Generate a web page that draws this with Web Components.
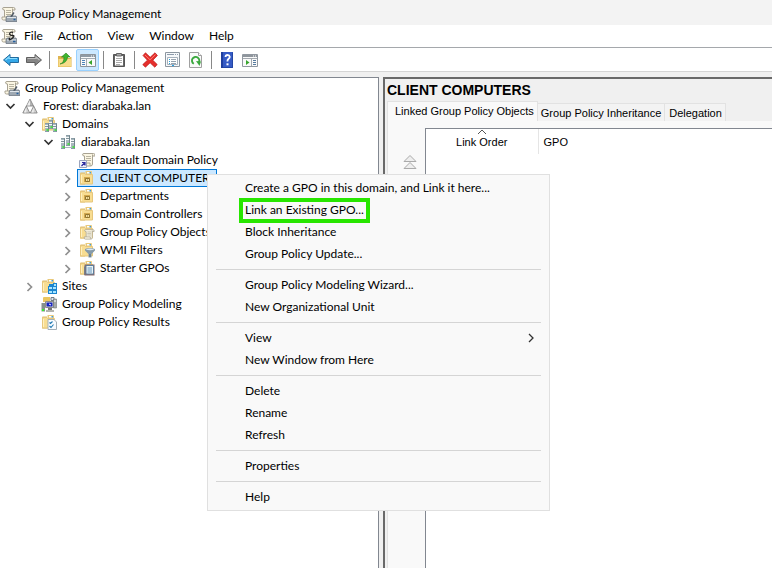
<!DOCTYPE html>
<html lang="en">
<head>
<meta charset="utf-8">
<title>Group Policy Management</title>
<style>
html, body { height: 100%; }
body { margin: 0; overflow: hidden; font: 12px/18px Lato, "Open Sans", "Noto Sans", sans-serif; color: #000; background: #f0f0f0; }
</style>
</head>
<body>
<gp-console>
  <gp-titlebar slot="title">Group Policy Management</gp-titlebar>
  <gp-menubar slot="menu"></gp-menubar>
  <gp-toolbar slot="tools"></gp-toolbar>
  <gp-tree slot="tree">
    <gp-node level="0" icon="console">Group Policy Management</gp-node>
    <gp-node level="1" icon="forest" state="open">Forest: diarabaka.lan</gp-node>
    <gp-node level="2" icon="domains" state="open">Domains</gp-node>
    <gp-node level="3" icon="domain" state="open">diarabaka.lan</gp-node>
    <gp-node level="4" icon="link">Default Domain Policy</gp-node>
    <gp-node level="4" icon="ou" state="closed" selected>CLIENT COMPUTERS</gp-node>
    <gp-node level="4" icon="ou" state="closed">Departments</gp-node>
    <gp-node level="4" icon="ou" state="closed">Domain Controllers</gp-node>
    <gp-node level="4" icon="gpos" state="closed">Group Policy Objects</gp-node>
    <gp-node level="4" icon="wmi" state="closed">WMI Filters</gp-node>
    <gp-node level="4" icon="starter" state="closed">Starter GPOs</gp-node>
    <gp-node level="2" icon="sites" state="closed">Sites</gp-node>
    <gp-node level="2" icon="modeling">Group Policy Modeling</gp-node>
    <gp-node level="2" icon="results">Group Policy Results</gp-node>
  </gp-tree>
  <gp-details slot="details">CLIENT COMPUTERS</gp-details>
  <gp-context-menu slot="popup">
    <gp-item>Create a GPO in this domain, and Link it here...</gp-item>
    <gp-item marked>Link an Existing GPO...</gp-item>
    <gp-item>Block Inheritance</gp-item>
    <gp-item>Group Policy Update...</gp-item>
    <gp-separator></gp-separator>
    <gp-item>Group Policy Modeling Wizard...</gp-item>
    <gp-item>New Organizational Unit</gp-item>
    <gp-separator></gp-separator>
    <gp-item submenu>View</gp-item>
    <gp-item>New Window from Here</gp-item>
    <gp-separator></gp-separator>
    <gp-item>Delete</gp-item>
    <gp-item>Rename</gp-item>
    <gp-item>Refresh</gp-item>
    <gp-separator></gp-separator>
    <gp-item>Properties</gp-item>
    <gp-separator></gp-separator>
    <gp-item>Help</gp-item>
  </gp-context-menu>
</gp-console>
<script>
const folder = `<path d="M1 3.500q0-1 1-1h4V14.500H1z" fill="#e0bd6c"/><path d="M6.500 1H12q1 0 1 1v3H6.500z" fill="#e9c97a"/><path d="M8 2h4v1.500H8z" fill="#fff"/><path d="M10.500 2H12v1.500h-1.500z" fill="#3b9be0"/><path d="M1.500 3.500h4l1 1h7V14h-12z" fill="#f8dd92" stroke="#e6c67c"/><path d="M2.500 5v8" stroke="#fff0bf"/>`;
const scroll = `<path d="M3 1.500h9.500q1.500 0 1.500 1.500v1h-2.500v8q0 2-2 2H2.500Q1 14 1 12.500V11h2.500V4Q1.500 4 1.500 2.800 1.500 1.500 3 1.500z" fill="#fbf6e3" stroke="#a8a292"/><path d="M11.500 4V2.500M3.500 11h5.500v1.500q0 1 .8 1.500" fill="none" stroke="#a8a292"/><path d="M5 4.500h5M5 6.500h5M5 8.500h5" stroke="#b9b4a2"/>`;
const server = (x, y, h) => `<path d="M${x} ${y}h4v${h}h-4z" fill="#a9b8be"/><path d="M${x + 3.5} ${y}v${h}" stroke="#71848c"/><path d="M${x} ${y + .5}h4M${x} ${y + h - .5}h4" stroke="#8395a0" stroke-width=".8"/><path d="M${x} ${y + 2.5}h3M${x} ${y + 4.5}h3" stroke="#f4f8f9"/><path d="M${x} ${y + 3.5}h3" stroke="#71848c" stroke-width=".7"/><path d="M${x + 1.5} ${y + h - 3}h2v2h-2z" fill="#4fe04a"/>`;
const icons = {
  console: scroll + `<path d="M6 10h9l1 2v3.500H5V12z" fill="#9fa9b3" stroke="#626c77" stroke-width=".7"/><path d="M6 11.500h9" stroke="#e0e6eb"/><path d="M12.500 13.500h2" stroke="#245f9e" stroke-width="1.500"/><path d="M9 10.500 12.500 6l1 1-2.500 4z" fill="#515b66"/>`,
  consolelock: scroll + `<path d="M6 10h9l1 2v3.500H5V12z" fill="#9fa9b3" stroke="#626c77" stroke-width=".7"/><path d="M6 12h9" stroke="#e0e6eb"/><path d="M12 13.500h2.500" stroke="#245f9e" stroke-width="1.500"/><path d="M12 4.500Q9 3.500 8.700 5.500T11.500 7.500 11 10.500 8.500 9.800" fill="none" stroke="#222" stroke-width="1.300"/>`,
  forest: `<path d="M8 1 4.500 8h7z" fill="#b5b5b5" stroke="#7c7c7c" stroke-width=".8"/><path d="M4.300 8 .8 15h7zM11.700 8l3.500 7h-7z" fill="#cfcfcf" stroke="#7c7c7c" stroke-width=".8"/><path d="M8 2v5.500H5zM4.300 9.500v5H2zM11.700 9.500v5H9.500z" fill="#eee"/>`,
  domains: folder + server(8, 4, 9) + server(4, 7, 9) + server(12, 7, 9),
  domain: server(6, 1, 11) + server(1, 4, 11) + server(11, 4, 11) + `<path d="M5 13.500h6" stroke="#a9b8be"/>`,
  link: `<g transform="translate(2 0)">${scroll}</g><path d="M.5 8.500h7v7h-7z" fill="#f1f3fa" stroke="#9ba4bd"/><path d="M3 10.500h3v3M6 10.500 2.500 14" fill="none" stroke="#2b2b9e" stroke-width="1.200"/>`,
  ou: folder + `<path d="M5 7h6v5H5z" fill="#d2a84e"/><path d="M6.500 8.500h4v3h-4z" fill="#f5df9d" stroke="#92762f"/><path d="M8 9.500h1v1H8z" fill="#92762f"/>`,
  gpos: folder + `<g transform="translate(4.500 4.500) scale(.76)">${scroll}</g>`,
  wmi: folder + `<path d="M6 7q5-2 10 0v1.500L12.500 12v3.500h-3V12L6 8.500z" fill="#879ba9"/><path d="M6.500 7.300q4.500-1.500 9 0-4.500 2-9 0z" fill="#d9e8f2"/><path d="M10.500 12h1v3h-1z" fill="#486a8e"/>`,
  starter: folder + `<path d="M5.500 4.500h10V15.500h-10z" fill="#8a6a6a"/><path d="M7 5.500h7.500V14H7z" fill="#eaf3f8" stroke="#5d7d9a"/><path d="M8.500 8h4.500M8.500 10h4.500M8.500 12h4.500" stroke="#6597bd"/><path d="M5.500 6.500v8.500" stroke="#7a7f86"/>`,
  sites: folder + `<path d="M8 6h4V5h4v11H7V8h1z" fill="#1b85cf"/><path d="M8 9h3v2H8zM12 9h3v2h-3zM8 13h3v2H8zM12 13h3v2h-3zM13 6h2v2h-2z" fill="#a9e6ff"/>`,
  modeling: `<path d="M2 2q0-1 1-1h6v5H2z" fill="#eac65f"/><path d="M4.500 5.500h8v6h-8z" fill="#d6d6d0" stroke="#8c8c89"/><path d="M5.500 6.500h6v4h-6z" fill="#1724c1"/><path d="M7 12h4v2H7z" fill="#777"/><path d="M5 15h8" stroke="#b3b3ad" stroke-width="2"/><path d="M.5 7h3.500v8.500H.5z" fill="#85908b"/><path d="M1 13h2v2H1z" fill="#32ee2c"/><path d="M10 1.500h3v3h-3z" fill="#dde4ed" stroke="#737c85"/><path d="M12.500 3h3v9h-3z" fill="#a4aaa9" stroke="#737978" stroke-width=".6"/><path d="M13 5h2M8 8l2 1" stroke="#fff"/>`,
  results: folder + `<path d="M7 5.500h6l2.500 2.500v7.500H7z" fill="#f7fbff" stroke="#a3afb7"/><path d="m8.500 8.500 1 1 2-2M8.500 12l1.500 1.500 2.500-3" fill="none" stroke="#237bb4" stroke-width="1.100"/>`,
  back: `<path d="M.5 8 7 2.500V5.500h8.500v5H7v3z" fill="#35a8e8" stroke="#226b9e"/><path d="M2.500 8 6 5v1.500h8" fill="none" stroke="#8bdcff" stroke-width="1.200"/>`,
  forward: `<path d="M15.500 8 9 2.500V5.500H.5v5H9v3z" fill="#858585" stroke="#5f5f5f"/><path d="M1.500 6.500H10V5l3.500 3" fill="none" stroke="#bcbcbc" stroke-width="1.200"/>`,
  up: `<path d="M1 4h5l1 1h7.500v10H1z" fill="#dfb450"/><path d="M1.500 7H14v7.500H1.500z" fill="#f7dc8a"/><path d="M11 5.500h2" stroke="#fff"/><path d="M3 12q4-1 4-7H4.500L9 1l4 4h-2.500Q10 11 3 12z" fill="#3fb52f" stroke="#268220" stroke-width=".6"/>`,
  tree: `<path d="M.5 2.500h15v12H.5z" fill="#fafafa" stroke="#8d949b"/><path d="M1 3h14v2H1z" fill="#8f9aa5"/><path d="M11 4h1M13 4h1" stroke="#fff"/><path d="M1 6.500h14M6.500 7v7" stroke="#a3abb2"/><path d="M2 8.500h3M2 10.500h3M2 12.500h3" stroke="#4d83ba"/><path d="M12 8v5l-3.500-2.500z" fill="#39a52c"/>`,
  clip: `<path d="M2.500 2.500h11v12h-11z" fill="#666" stroke="#555"/><path d="M4 4h8v9.500H4z" fill="#fff"/><path d="M5.500 1.500h5V4h-5z" fill="#aaa" stroke="#666"/><path d="M5 6.500h6M5 8.500h6M5 10.500h6M5 12.500h4" stroke="#aaa"/>`,
  remove: `<path d="m3.500.8 4.700 4.500L13 .8l2.400 2.700-4.600 4.700 4.400 4.300-2.400 2.700-4.700-4.400-4.700 4.400-2.600-2.600 4.600-4.400L1 3.500z" fill="#e62f2c" stroke="#b81717" stroke-width=".7"/><path d="m3 3 5 4.800L13.500 2.500" fill="none" stroke="#ff796f"/>`,
  props: `<path d="M.5.500h14v14H.5z" fill="#f6f8fa" stroke="#8c96a0"/><path d="M2 2.500h7M10 2.500h1M12 2.500h1" stroke="#8d9bab"/><path d="M2.500 5.500h10v7h-10z" fill="#fff" stroke="#a6b1bc"/><path d="M4 7.500h1M4 9.500h1M4 11.500h1" stroke="#24a0d8"/><path d="M6 7.500h5M6 9.500h5M6 11.500h5" stroke="#97a3af"/><path d="M7 13.500h2" stroke="#22a0e5"/>`,
  refresh: `<path d="M1.500.500h9l3 3v12h-12z" fill="#fafafa" stroke="#a0a0a0"/><path d="M10.500.500v3h3" fill="#fff" stroke="#a0a0a0"/><path d="M5.800 11.800A3.700 3.700 0 1 1 10.500 11" fill="none" stroke="#3aa83d" stroke-width="1.900"/><path d="M8 9l5 .5-1.500 4.500z" fill="#3aa83d"/>`,
  help: `<path d="M2 0h12v16H2z" fill="#365bc5"/><path d="M2 0h2v16H2z" fill="#203f9d"/><path d="M13.500.500v15H4" fill="none" stroke="#2346a4"/><path d="M6.500 5q0-2 2-2t2.300 1.800q0 1.200-1.400 2.200-1 .8-1 2.500" fill="none" stroke="#fff" stroke-width="1.800"/><path d="M7.500 11.300h2v2h-2z" fill="#fff"/>`,
  action: `<path d="M.5 2.500h15v12H.5z" fill="#fafafa" stroke="#9198a0"/><path d="M1 3h14v2H1z" fill="#8f969d"/><path d="M11 4h1M13 4h1" stroke="#fff"/><path d="M1 6.500h14M9.500 7v7" stroke="#a3a9af"/><path d="M11 8.500h3M11 10.500h3M11 12.500h3" stroke="#557a9e"/><path d="M4 8v5l3.500-2.500z" fill="#38a52d"/>`,
  open: `<path d="m4.500 6 4 4 4-4" fill="none" stroke="#333" stroke-width="1.700"/>`,
  closed: `<path d="m6.500 5 4 4-4 4" fill="none" stroke="#8f8f8f" stroke-width="1.700"/>`,
  submenu: `<path d="m6 4 4 4-4 4" fill="none" stroke="#333" stroke-width="1.300"/>`,
  sort: `<path d="m4 10 4-4 4 4" fill="none" stroke="#555"/>`,
  top: `<path d="M8 1.500 14 7.500H2zM8 8.500l6 6H2z" fill="#eee" stroke="#aaa"/>`
};

function define(name, css, html, setup) {
  const template = document.createElement('template');
  customElements.define(name, class extends HTMLElement {
    connectedCallback() {
      if (this.shadowRoot) return;
      template.innerHTML = `<style>:host,*{box-sizing:border-box}button{font:inherit;color:inherit;background:none;border:0;padding:0;margin:0;white-space:nowrap}${css}</style>${typeof html === 'function' ? html(this) : html}`;
      this.attachShadow({ mode: 'open' }).append(template.content.cloneNode(true));
      if (setup) setup(this);
    }
  });
}

define('gp-icon', ':host{display:block;flex:none;width:16px;height:16px}svg{display:block;width:16px;height:16px}',
  el => `<svg viewBox="0 0 16 16" aria-hidden="true">${icons[el.getAttribute('name')]}</svg>`);

define('gp-titlebar', ':host{display:flex;align-items:center;gap:5px;height:25px;padding:2px 0 0 1px;background:#f3f3f3}',
  '<gp-icon name="console"></gp-icon><span><slot></slot></span>');

define('gp-menubar', ':host{display:flex;align-items:center;height:22px;padding-left:1px;background:#fff}nav{display:flex;gap:15px;padding-left:7px}',
  `<gp-icon name="consolelock"></gp-icon><nav>${['File', 'Action', 'View', 'Window', 'Help'].map(t => `<button>${t}</button>`).join('')}</nav>`);

define('gp-toolbar', `:host{display:flex;align-items:center;height:25px;padding-left:3px;background:#fff;border-top:1px solid #a5a8ac;border-bottom:1px solid #d5d5d5}
  button{display:grid;place-items:center;width:23px;height:22px;border:1px solid transparent}button:first-of-type{margin-left:-4px}
  button.on{background:#cce8ff;border-color:#99d1ff;border-radius:2px}i{width:1px;height:18px;margin:0 3px 0 4px;background:#888}`,
  [['back', 'Back'], ['forward', 'Forward'], 0, ['up', 'Up'], ['tree', 'Show console tree'], 0, ['clip', 'Copy'], 0, ['remove', 'Delete'], ['props', 'Properties'], ['refresh', 'Refresh'], 0, ['help', 'Help'], ['action', 'Show action pane']]
    .map(b => b ? `<button class="${b[0] === 'tree' ? 'on' : ''}" aria-label="${b[1]}"><gp-icon name="${b[0]}"></gp-icon></button>` : '<i></i>').join(''));

define('gp-tree', ':host{display:block;padding-top:1px;min-height:100%;background:#fff;border:1px solid #828790;border-left:0;border-bottom:0}', '<slot></slot>',
  el => el.setAttribute('role', 'tree'));

define('gp-node', `:host{display:flex;align-items:center;height:18px;padding-left:calc(var(--level) * 19px - 17px)}:host([level="0"]){padding-left:2px}
  .twist{width:16px;height:16px;margin-right:2px;flex:none}:host([level="0"]) .twist{display:none}
  .row{display:flex;align-items:center;gap:5px;height:18px;border:1px solid transparent;padding-left:1px;white-space:nowrap}
  :host([selected]) .row{background:#cce8ff;border-color:#0078d7}`,
  el => {
    const s = el.getAttribute('state');
    const twist = s ? `<button class="twist" aria-label="${s === 'open' ? 'Collapse' : 'Expand'}"><gp-icon name="${s}"></gp-icon></button>` : '<span class="twist"></span>';
    return `${twist}<div class="row"><gp-icon name="${el.getAttribute('icon')}"></gp-icon><span><slot></slot></span></div>`;
  },
  el => { el.style.setProperty('--level', el.getAttribute('level')); el.setAttribute('role', 'treeitem'); });

define('gp-details', `:host{display:flex;flex-direction:column;height:100%;border:solid #696969;border-width:2px 0 0 2px;font:11px/14px "Liberation Sans",Arial,sans-serif;background:#f0f0f0}
  h1{margin:0;padding:3px 2px 0;font-size:14px;line-height:16px;height:22px}
  .tabs{display:flex;align-items:flex-end;padding-left:2px}
  .tabs button{height:18px;padding:0 3px;border:1px solid #e2e2e2;border-left:0;border-bottom:0;background:#f3f3f3}
  .tabs button:last-child{padding-left:4px}
  .tabs .on{height:20px;padding:0 3px 1px 7px;border-left:1px solid #e2e2e2;background:#f9f9f9}
  .panel{flex:1;display:grid;grid-template-columns:37px 1fr;padding-top:7px;margin-left:2px;background:#f9f9f9;border-left:1px solid #e2e2e2}
  .side{padding:26px 0 0 14px}.side button{display:block}
  .list{background:#fff;border:1px solid #828790;border-right:0;border-bottom:0}
  table{border-collapse:collapse;width:100%}th{font-weight:400;padding:0;height:25px;vertical-align:middle;text-align:left}
  th:first-child{width:112px;text-align:center;border-right:1px solid #e5e5e5;position:relative}th:first-child gp-icon{position:absolute;left:48px;top:-5px}
  th:last-child{padding-left:5px}`,
  `<h1><slot></slot></h1><div class="tabs" role="tablist"><button class="on" role="tab" aria-selected="true">Linked Group Policy Objects</button><button role="tab">Group Policy Inheritance</button><button role="tab">Delegation</button></div>
  <div class="panel" role="tabpanel"><div class="side"><button aria-label="Move link to top"><gp-icon name="top"></gp-icon></button></div>
  <div class="list"><table><thead><tr><th scope="col"><gp-icon name="sort"></gp-icon>Link Order</th><th scope="col">GPO</th></tr></thead></table></div></div>`);

define('gp-context-menu', ':host{display:block;width:343px;padding:2px 0;background:#f9f9f9;border:1px solid #e0e0e0}', '<slot></slot>',
  el => el.setAttribute('role', 'menu'));

define('gp-item', `:host{display:block}button{display:flex;align-items:center;justify-content:space-between;width:100%;height:22px;padding:0 10px 0 35px}
  span{padding:0 2px 1px;line-height:16px}:host([marked]) span{outline:4px solid #28e600}`,
  el => `<button role="menuitem"><span><slot></slot></span>${el.hasAttribute('submenu') ? '<gp-icon name="submenu"></gp-icon>' : ''}</button>`);

define('gp-separator', ':host{display:block;padding:4px 8px}hr{height:1px;margin:0;border:0;background:#d5d5d5}', '<hr>');

define('gp-console', `:host{display:flex;flex-direction:column;min-height:100vh;position:relative}
  main{flex:1;display:grid;grid-template-columns:379px 1fr;column-gap:4px;padding-top:5px;background:#f0f0f0}main>div{min-width:0;display:grid}
  .popup{position:absolute;left:207px;top:174px}`,
  '<slot name="title"></slot><slot name="menu"></slot><slot name="tools"></slot><main><div><slot name="tree"></slot></div><div><slot name="details"></slot></div></main><div class="popup"><slot name="popup"></slot></div>');
</script>
</body>
</html>
